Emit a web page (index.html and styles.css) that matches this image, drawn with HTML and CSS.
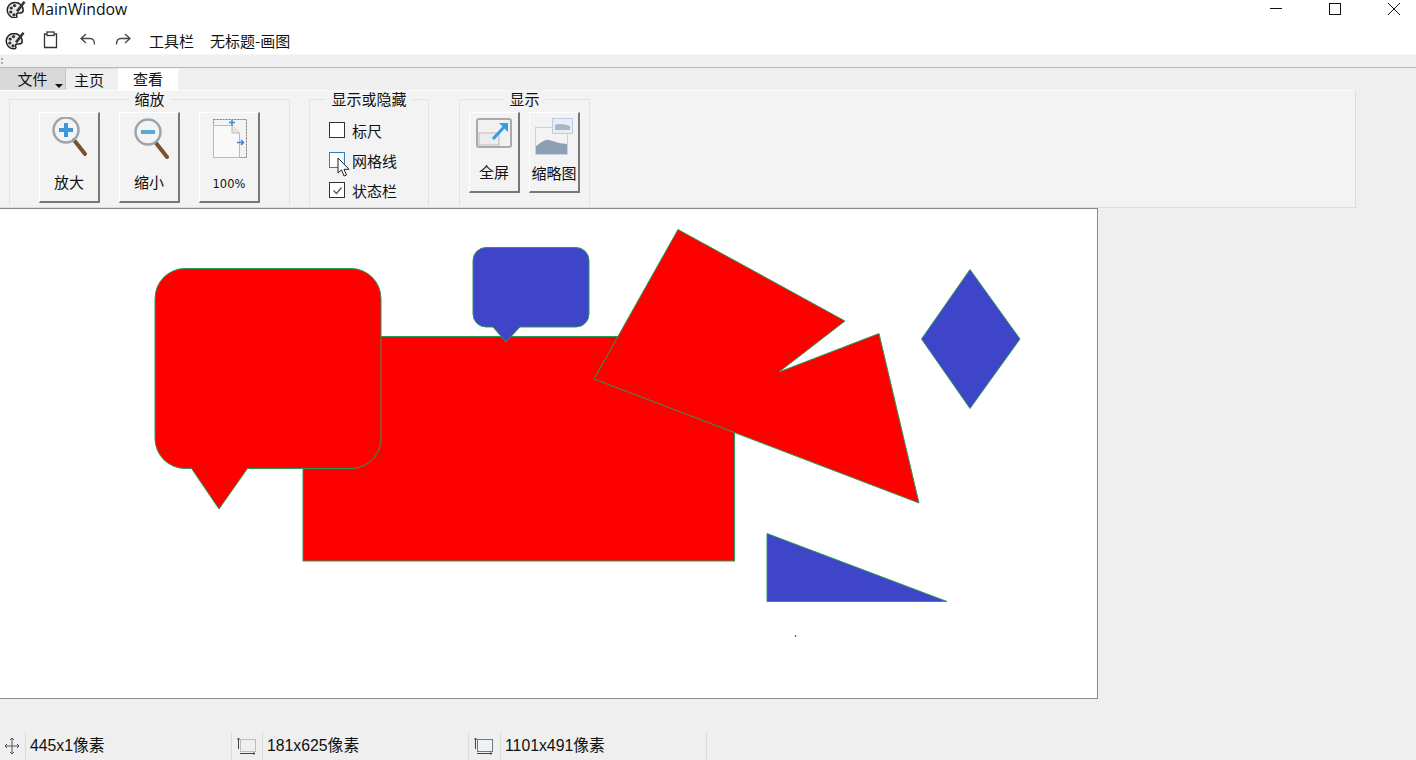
FILE: index.html
```html
<html>
  <head>
    <title>MainWindow</title>
    <link rel="stylesheet" href="styles.css">
  </head>
  <body>
    <svg width="0" height="0" class="defs">
      <defs>
        <symbol id="palette" viewBox="0 0 20 20">
          <path d="M9 3.500C4.500 3.500 1.200 7 1.200 11s3.300 7.800 7.800 7.800c2 0 2.300-1.300 1.700-2.400-.6-1.200.2-2.300 1.600-2.300h2c1.700 0 2.900-1.100 2.900-3 0-4.200-3.700-7.600-8.200-7.600z" fill="#e8e8e8" stroke="#222" stroke-width="1.500"/>
          <circle cx="5.200" cy="9" r="1.600" fill="#333"/>
          <circle cx="8.500" cy="6.600" r="1.600" fill="#333"/>
          <circle cx="4.800" cy="13" r="1.600" fill="#333"/>
          <circle cx="8" cy="15.800" r="1.600" fill="#333"/>
          <path d="M10 11.500l7.500-9.500 2 1.500-7.500 9.700z" fill="#333"/>
        </symbol>
        <radialGradient id="lens" cx="0.5" cy="0.4" r="0.6">
          <stop offset="0" stop-color="#f4faff"/>
          <stop offset="1" stop-color="#b5daf6"/>
        </radialGradient>
        <linearGradient id="photo" x1="0" y1="0" x2="0" y2="1">
          <stop offset="0" stop-color="#dbe3ed"/>
          <stop offset="0.5" stop-color="#bcc8d6"/>
          <stop offset="1" stop-color="#9fafc2"/>
        </linearGradient>
      </defs>
    </svg>

    <div class="titlebar">
      <svg class="app-icon" width="20" height="20"><use href="#palette"/></svg>
      <span class="title">MainWindow</span>
      <div class="window-buttons">
        <svg width="14" height="14" viewBox="0 0 14 14"><path d="M1 6.500h12" stroke="#111" fill="none"/></svg>
        <svg width="14" height="14" viewBox="0 0 14 14"><rect x="1.500" y="1.500" width="11" height="11" stroke="#111" fill="none"/></svg>
        <svg width="14" height="14" viewBox="0 0 14 14"><path d="M1 1l12 12M13 1L1 13" stroke="#111" fill="none"/></svg>
      </div>
    </div>

    <div class="quickbar">
      <svg width="20" height="20"><use href="#palette"/></svg>
      <svg class="quick-clip" width="16" height="18" viewBox="0 0 16 18">
        <path d="M3.500 3H1.500v13.500h12V3h-2" fill="none" stroke="#333" stroke-width="1.300"/>
        <rect x="4" y="1" width="7" height="3.500" fill="none" stroke="#333" stroke-width="1.300"/>
      </svg>
      <svg class="quick-undo" width="18" height="16" viewBox="0 0 18 16">
        <path d="M7 2L2 6.500 7 11M2 6.500h9c3 0 4.500 2 4.500 6" fill="none" stroke="#444" stroke-width="1.300"/>
      </svg>
      <svg class="quick-redo" width="18" height="16" viewBox="0 0 18 16">
        <path d="M11 2l5 4.500-5 4.500M16 6.500H7c-3 0-4.500 2-4.500 6" fill="none" stroke="#444" stroke-width="1.300"/>
      </svg>
      <span class="quick-text">工具栏</span>
      <span class="quick-text doc-name">无标题-画图</span>
    </div>

    <div class="handle"><span class="grip"></span></div>

    <div class="tabs">
      <div class="tab tab-file">文件<span class="caret"></span></div>
      <div class="tab tab-home">主页</div>
      <div class="tab tab-view">查看</div>
    </div>

    <div class="ribbon">
      <fieldset class="group group-zoom">
        <legend>缩放</legend>
        <div class="group-body">
          <div class="big-btn">
            <svg width="40" height="42" viewBox="0 0 40 42">
              <path d="M25 23l11 14" stroke="#7a5230" stroke-width="4" stroke-linecap="round"/>
              <circle cx="17" cy="13" r="12.500" fill="url(#lens)" stroke="#9aa5ae" stroke-width="2.500"/>
              <path d="M17 6v14M10 13h14" stroke="#3a97dc" stroke-width="4"/>
            </svg>
            <span>放大</span>
          </div>
          <div class="big-btn">
            <svg width="40" height="42" viewBox="0 0 40 42">
              <path d="M27 26l11 14" stroke="#7a5230" stroke-width="4" stroke-linecap="round"/>
              <circle cx="19" cy="15" r="12.500" fill="url(#lens)" stroke="#9aa5ae" stroke-width="2.500"/>
              <path d="M12 15h14" stroke="#5aa7de" stroke-width="4"/>
            </svg>
            <span>缩小</span>
          </div>
          <div class="big-btn">
            <svg width="40" height="42" viewBox="0 0 40 42">
              <rect x="4.500" y="2.500" width="33" height="38" fill="none" stroke="#777" stroke-dasharray="2 1"/>
              <path d="M4.500 8.500H23l7.500 7.500v24.500H4.500z" fill="#f9f9f9" stroke="#bbb"/>
              <path d="M23 8.500V16h7.500" fill="#e6e6e6" stroke="#bbb"/>
              <path d="M20 5.500h6M23 3v6M34 25.500h-6M32 23l2.500 2.500L32 28" stroke="#3a86d0" stroke-width="1.500" fill="none"/>
            </svg>
            <span class="pct">100%</span>
          </div>
        </div>
      </fieldset>

      <fieldset class="group group-show">
        <legend>显示或隐藏</legend>
        <div class="group-body">
          <label class="check"><span class="box"></span>标尺</label>
          <label class="check check-hover">
            <span class="box box-hover"></span>网格线
            <svg class="cursor" width="14" height="21" viewBox="0 0 14 21">
              <path d="M1 1v15l3.500-3.200L7 19l2.500-1-2.500-5.700h5z" fill="#fff" stroke="#222"/>
            </svg>
          </label>
          <label class="check">
            <span class="box">
              <svg width="13" height="13" viewBox="0 0 13 13"><path d="M2.500 6.500l3 3 5-6" fill="none" stroke="#555" stroke-width="1.200"/></svg>
            </span>状态栏
          </label>
        </div>
      </fieldset>

      <fieldset class="group group-display">
        <legend>显示</legend>
        <div class="group-body">
          <div class="big-btn big-btn-small">
            <svg width="36" height="32" viewBox="0 0 36 32">
              <rect x="1" y="2" width="34" height="28" rx="2" fill="#f1f1f1" stroke="#aaa" stroke-width="2"/>
              <rect x="3" y="16" width="20" height="12" fill="#ececec" stroke="#bbb"/>
              <path d="M17 22L29 9" stroke="#2f9fe0" stroke-width="3"/>
              <path d="M23 6h9v9z" fill="#2f9fe0"/>
            </svg>
            <span>全屏</span>
          </div>
          <div class="big-btn big-btn-small">
            <svg width="40" height="38" viewBox="0 0 40 38">
              <rect x="1.500" y="10.500" width="32" height="27" fill="url(#photo)" stroke="#c3d3e6"/>
              <path d="M2 29c5-3 9-7 13-6 5 1 11 4 18 4v10H2z" fill="#8e9fb3"/>
              <rect x="18.500" y="1.500" width="20" height="15" fill="#e8edf3" stroke="#b9cde4"/>
              <path d="M21 8c5-2 9-1 15 1v4H21z" fill="#a9b6c5"/>
            </svg>
            <span class="thumb-label">缩略图</span>
          </div>
        </div>
      </fieldset>
    </div>

    <div class="canvas">
      <svg class="drawing" width="1097" height="489" viewBox="0 209 1097 489">
        <rect x="303" y="336.500" width="431.500" height="224.500"/>
        <path d="M185 268.500H351a30 30 0 0 1 30 30V438.500a30 30 0 0 1-30 30H247.500L219 509 191.500 468.500H185a30 30 0 0 1-30-30V298.500a30 30 0 0 1 30-30z"/>
        <path class="blue" d="M486 247.500H576a13 13 0 0 1 13 13V314a13 13 0 0 1-13 13H520L506 342 493 327H486a13 13 0 0 1-13-13V260.500a13 13 0 0 1 13-13z"/>
        <polygon points="678,229.500 845,321 779,372 879,333.500 919,503 594,379"/>
        <polygon class="blue" points="970,269.500 1020,339 970,408.500 921.500,339"/>
        <polygon class="blue" points="767,533.500 947,601.500 767,601.500"/>
        <path class="speck" d="M795 637l1-2"/>
      </svg>
    </div>

    <div class="statusbar">
      <div class="cell cell-pos">
        <svg class="cell-icon" width="16" height="18" viewBox="0 0 16 18">
          <path d="M8 1v16M1 9h14M6 3l2-2 2 2M6 15l2 2 2-2M3 7L1 9l2 2M13 7l2 2-2 2" fill="none" stroke="#555"/>
        </svg>
        <span class="cell-text">445x1像素</span>
      </div>
      <div class="cell cell-sel">
        <svg class="cell-icon" width="20" height="18" viewBox="0 0 20 18">
          <rect x="3.500" y="2.500" width="15" height="12" fill="none" stroke="#888" stroke-dasharray="1 1"/>
          <path d="M1.500 1v11M.5 2.500l1-1.500 1 1.500M3 16.500h15M16.500 15.500l1.500 1-1.500 1" stroke="#444" fill="none"/>
        </svg>
        <span class="cell-text">181x625像素</span>
      </div>
      <div class="cell cell-size">
        <svg class="cell-icon" width="20" height="18" viewBox="0 0 20 18">
          <rect x="3.500" y="2.500" width="15" height="12" fill="#eef2f6" stroke="#777"/>
          <path d="M1.500 1v11M.5 2.500l1-1.500 1 1.500M3 16.500h15M16.500 15.500l1.500 1-1.500 1" stroke="#444" fill="none"/>
        </svg>
        <span class="cell-text">1101x491像素</span>
      </div>
    </div>
  </body>
</html>
```

FILE: styles.css
```css
html,
body {
  margin: 0;
  height: 760px;
  overflow: hidden;
}

body {
  display: flex;
  flex-direction: column;
  background-color: #efefef;
  color: #111;
  font-family: "Noto Sans CJK SC", "Noto Sans", sans-serif;
  font-size: 15px;
}

.defs {
  display: none;
}

/* title bar */
.titlebar {
  display: flex;
  align-items: center;
  height: 18px;
  background-color: #fff;
  flex: none;
}

.app-icon {
  margin-left: 6px;
  flex: none;
}

.title {
  margin-left: 5px;
  font-family: "Open Sans", "Noto Sans", sans-serif;
  font-size: 15.800px;
}

.window-buttons {
  display: flex;
  gap: 45px;
  margin-left: auto;
  margin-right: 15px;
}

/* quick access */
.quickbar {
  display: flex;
  align-items: center;
  box-sizing: border-box;
  height: 36px;
  padding: 8px 0 0 5px;
  background-color: #fff;
  flex: none;
}

.quick-clip {
  margin-left: 18px;
}

.quick-undo {
  margin-left: 20px;
}

.quick-redo {
  margin-left: 17px;
}

.quick-text {
  margin-left: 17px;
}

.doc-name {
  margin-left: 16px;
}

.handle {
  height: 12px;
  border-top: 1px solid #f7f7f7;
  border-bottom: 1px solid #b8b8b8;
  background-color: #efefef;
  flex: none;
}

.grip {
  display: block;
  width: 2px;
  height: 6px;
  margin: 3px 0 0 1px;
  border-left: 2px dotted #aaa;
}

/* tabs */
.tabs {
  display: flex;
  height: 22px;
  flex: none;
}

.tab {
  box-sizing: border-box;
  text-align: center;
  line-height: 21px;
}

.tab-file {
  position: relative;
  width: 66px;
  background-color: #d9d9d9;
  border-right: 1px solid #c4c4c4;
}

.caret {
  position: absolute;
  right: 2px;
  bottom: 2px;
  border: 4px solid transparent;
  border-top-color: #111;
  border-bottom-width: 0;
}

.tab-home {
  width: 52px;
  padding-right: 6px;
  border-top: 1px solid #ddd;
}

.tab-view {
  width: 60px;
  background-color: #fff;
  border-top: 1px solid #f5f5f5;
  line-height: 19px;
}

/* ribbon */
.ribbon {
  display: flex;
  box-sizing: border-box;
  width: 1356px;
  height: 118px;
  padding-left: 9px;
  background-color: #f3f3f3;
  border: 1px solid #fbfbfb;
  border-right-color: #dcdcdc;
  border-bottom-color: #dcdcdc;
  border-left: none;
  flex: none;
}

.group {
  box-sizing: border-box;
  height: 115px;
  margin: 0;
  padding: 0;
  border: 1px solid #e3e3e3;
  border-bottom: none;
}

.group legend {
  padding: 0 5px;
  margin: 0 auto;
  line-height: 16px;
}

.group-body {
  display: flex;
}

.group-zoom {
  width: 281px;
  margin-right: 19px;
}

.group-zoom .group-body {
  padding: 5px 0 0 29px;
  gap: 19px;
}

.group-show {
  width: 120px;
  margin-right: 30px;
}

.group-show .group-body {
  flex-direction: column;
  padding: 8px 0 0 19px;
}

.group-display {
  width: 131px;
}

.group-display .group-body {
  padding: 5px 0 0 9px;
  gap: 9px;
}

.big-btn {
  display: flex;
  flex-direction: column;
  align-items: center;
  box-sizing: border-box;
  width: 61px;
  height: 91px;
  padding-top: 4px;
  background-color: #f3f3f3;
  border: 1px solid;
  border-color: #fff #777 #777 #fff;
  border-bottom-width: 2px;
  border-right-width: 2px;
}

.big-btn span {
  margin-top: 13px;
  line-height: 20px;
}

.big-btn .pct {
  margin-top: 15px;
  font-family: "DejaVu Sans", sans-serif;
  font-size: 11.500px;
}

.big-btn-small {
  width: 51px;
  height: 81px;
}

.big-btn-small .thumb-label {
  margin-top: 8px;
  white-space: nowrap;
}

.check {
  position: relative;
  display: flex;
  align-items: center;
  height: 30px;
  gap: 7px;
}

.box {
  display: flex;
  align-items: center;
  justify-content: center;
  box-sizing: border-box;
  width: 16px;
  height: 16px;
  background-color: #fff;
  border: 1px solid #333;
}

.box-hover {
  border-color: #2f7fb8;
}

.cursor {
  position: absolute;
  left: 8px;
  top: 12px;
}

/* canvas */
.canvas {
  box-sizing: border-box;
  width: 1098px;
  height: 491px;
  background-color: #fff;
  border: 1px solid #8a8a8a;
  border-left: none;
  flex: none;
}

.drawing {
  display: block;
}

.drawing rect,
.drawing path,
.drawing polygon {
  fill: #ff0000;
  stroke: #2a9a5a;
  stroke-width: 1;
}

.drawing .blue {
  fill: #3f45c9;
}

.drawing .speck {
  fill: none;
  stroke: #336;
}

/* status bar */
.statusbar {
  display: flex;
  height: 28px;
  margin-top: auto;
}

.cell {
  display: flex;
  align-items: center;
  box-sizing: border-box;
  height: 28px;
  border-right: 1px solid #dcdcdc;
}

.cell-pos {
  width: 232px;
}

.cell-sel {
  width: 237px;
}

.cell-size {
  width: 238px;
}

.cell-icon {
  flex: none;
  margin-left: 5px;
  margin-right: 5px;
}

.cell-pos .cell-icon {
  margin-left: 4px;
}

.cell-size .cell-icon {
  margin-right: 6px;
}

.cell-text {
  padding-left: 4px;
  height: 28px;
  line-height: 28px;
  border-left: 1px solid #dcdcdc;
  font-family: "Liberation Sans", "Noto Sans CJK SC", sans-serif;
  font-size: 15.800px;
}
```
